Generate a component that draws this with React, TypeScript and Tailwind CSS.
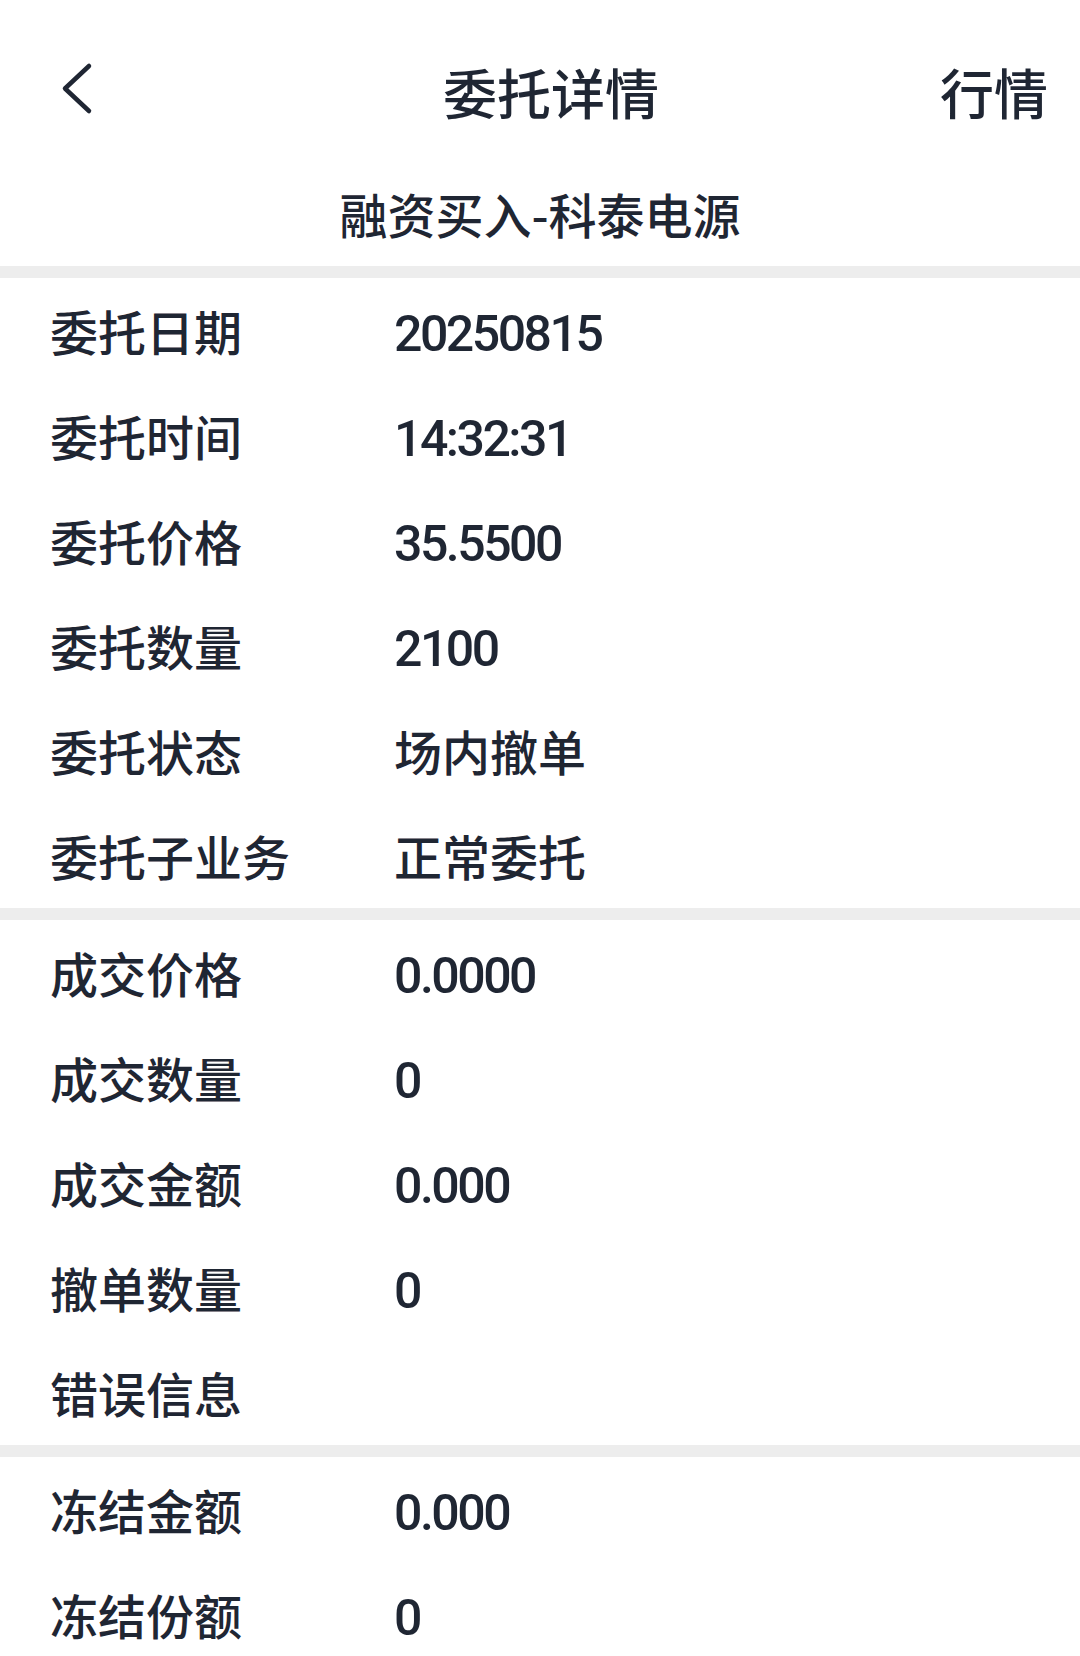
import React from "react";

const cjk = "font-['Noto_Sans_CJK_SC','Noto_Sans',sans-serif]";
const num = "font-['Roboto','Noto_Sans_CJK_SC',sans-serif]";

type Row = { label: string; value?: string };

const sections: Row[][] = [
  [
    { label: "委托日期", value: "20250815" },
    { label: "委托时间", value: "14:32:31" },
    { label: "委托价格", value: "35.5500" },
    { label: "委托数量", value: "2100" },
    { label: "委托状态", value: "场内撤单" },
    { label: "委托子业务", value: "正常委托" },
  ],
  [
    { label: "成交价格", value: "0.0000" },
    { label: "成交数量", value: "0" },
    { label: "成交金额", value: "0.000" },
    { label: "撤单数量", value: "0" },
    { label: "错误信息" },
  ],
  [
    { label: "冻结金额", value: "0.000" },
    { label: "冻结份额", value: "0" },
  ],
];

function DetailRow({ label, value }: Row) {
  const isNum = value !== undefined && /^[0-9.:]+$/.test(value);
  return (
    <div className="flex h-[105px] items-center pl-[50px]">
      <span className={`w-[344px] mb-[2px] text-[48px] font-medium leading-none text-[#1f2633] ${cjk}`}>
        {label}
      </span>
      {value !== undefined && (
        <span
          className={
            isNum
              ? `mt-[6px] text-[50px] font-medium leading-none tracking-[-2.5px] text-[#1f2633] ${num}`
              : `mb-[2px] text-[48px] font-medium leading-none text-[#1f2633] ${cjk}`
          }
        >
          {value}
        </span>
      )}
    </div>
  );
}

export default function App() {
  return (
    <div className={`w-[1080px] h-[1656px] overflow-hidden bg-white ${cjk}`}>
      <div className="relative flex h-[184px] items-center justify-center pl-[22px]">
        <svg
          className="absolute left-[56px] top-[60px]"
          width="40"
          height="58"
          viewBox="0 0 40 58"
          fill="none"
        >
          <path
            d="M33 6 L9 28.5 L33 51"
            stroke="#1f2633"
            strokeWidth="4.5"
            strokeLinecap="round"
            strokeLinejoin="round"
          />
        </svg>
        <h1 className="text-[54px] font-medium leading-none text-[#1f2633]">委托详情</h1>
        <span className="absolute right-[32px] text-[54px] font-medium leading-none text-[#1f2633]">
          行情
        </span>
      </div>
      <div className="flex h-[64px] items-center justify-center pb-[6px] text-[48px] font-medium leading-none text-[#1f2633] mb-[18px]">
        融资买入-科泰电源
      </div>
      {sections.map((rows, i) => (
        <div key={i} className="border-t-[12px] border-[#ededed]">
          {rows.map((r) => (
            <DetailRow key={r.label} {...r} />
          ))}
        </div>
      ))}
    </div>
  );
}
